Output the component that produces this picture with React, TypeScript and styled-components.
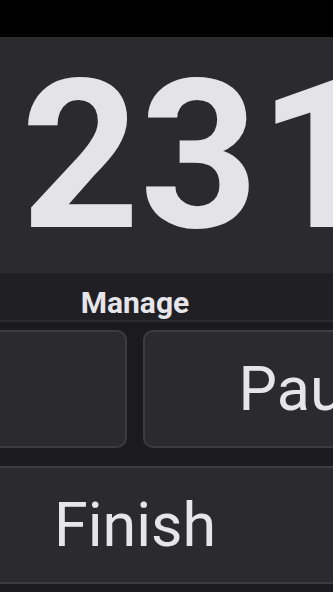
import React from 'react'
import styled, { createGlobalStyle } from 'styled-components'

const GlobalStyle = createGlobalStyle`
  html, body {
    margin: 0;
    padding: 0;
    background: #1b1a1e;
  }
  * {
    box-sizing: border-box;
  }
`

const Screen = styled.div`
  width: 333px;
  height: 592px;
  overflow: hidden;
  display: flex;
  flex-direction: column;
  background: #1b1a1e;
  font-family: Roboto, 'Liberation Sans', sans-serif;
  color: #e6e5ea;
`

const StatusBar = styled.div`
  height: 37px;
  flex-shrink: 0;
  background: #000;
`

const CounterPanel = styled.div`
  height: 236px;
  flex-shrink: 0;
  display: flex;
  align-items: center;
  padding: 3px 0 0 21px;
  background: #2b2a2e;
  overflow: hidden;
`

const Count = styled.span`
  font-size: 207px;
  font-weight: 700;
  line-height: 1;
  white-space: nowrap;
  color: #e4e3e8;
`

const Controls = styled.div`
  width: 736px;
  margin-left: -233px;
  display: flex;
  flex-direction: column;
`

const SectionHeader = styled.div`
  height: 49px;
  padding-top: 12px;
  text-align: center;
  font-size: 30px;
  font-weight: 700;
  line-height: 35px;
  background: #201f23;
  border-bottom: 2px solid #2a292d;
`

const ButtonRow = styled.div`
  display: grid;
  grid-template-columns: 1fr 1fr;
  gap: 16px;
  padding-top: 8px;
`

const ControlButton = styled.button`
  height: 118px;
  display: flex;
  align-items: center;
  justify-content: center;
  padding: 0;
  background: #2b2a2e;
  border: 2px solid #3d3c40;
  border-radius: 10px;
  color: #e6e5ea;
  font-family: Roboto, 'Liberation Sans', sans-serif;
  font-size: 61px;
  font-weight: 400;
  white-space: nowrap;
`

const WideButton = styled(ControlButton)`
  margin-top: 18px;
`

const App: React.FC = () => {
  return (
    <>
      <GlobalStyle />
      <Screen>
        <StatusBar />
        <CounterPanel>
          <Count>231</Count>
        </CounterPanel>
        <Controls>
          <SectionHeader>Manage</SectionHeader>
          <ButtonRow>
            <ControlButton />
            <ControlButton>Pause</ControlButton>
          </ButtonRow>
          <WideButton>Finish</WideButton>
        </Controls>
      </Screen>
    </>
  )
}

export default App
